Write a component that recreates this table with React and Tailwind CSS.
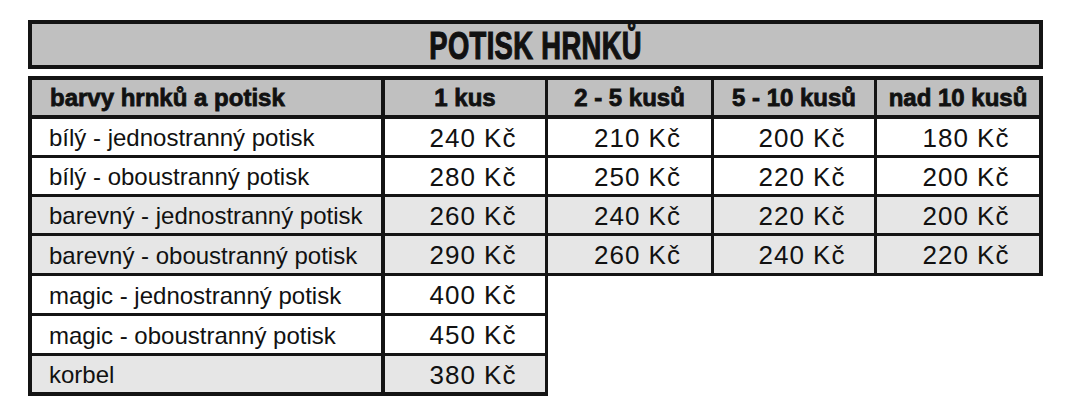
import React from "react";

const rows = [
  { label: "bílý - jednostranný potisk", prices: ["240 Kč", "210 Kč", "200 Kč", "180 Kč"], gray: false, h: "h-[39px] border-b-[3px]" },
  { label: "bílý - oboustranný potisk", prices: ["280 Kč", "250 Kč", "220 Kč", "200 Kč"], gray: false, h: "h-[39px] border-b-[3px]" },
  { label: "barevný - jednostranný potisk", prices: ["260 Kč", "240 Kč", "220 Kč", "200 Kč"], gray: true, h: "h-[39px] border-b-[3px]" },
  { label: "barevný - oboustranný potisk", prices: ["290 Kč", "260 Kč", "240 Kč", "220 Kč"], gray: true, h: "h-[40px] border-b-[3px]" },
  { label: "magic - jednostranný potisk", prices: ["400 Kč"], gray: false, h: "h-[40px] border-b-[3px]" },
  { label: "magic - oboustranný potisk", prices: ["450 Kč"], gray: false, h: "h-[40px] border-b-[3px]" },
  { label: "korbel", prices: ["380 Kč"], gray: true, h: "h-[40px] border-b-4" },
];

const colW = ["w-[163px] border-r-[3px]", "w-[166px] border-r-[3px]", "w-[163px] border-r-[3px]", "w-[166px] border-r-4"];

export default function App() {
  return (
    <div className="w-[1071px] h-[418px] bg-white pt-[20px] pl-[28px] text-[#111]" style={{ fontFamily: '"Liberation Sans", Arial, sans-serif' }}>
      <div className="w-[1015px] h-[49px] border-4 border-[#141414] bg-[#c0c0c0] flex items-center justify-center">
        <span className="inline-block scale-x-[0.72] text-[38px] font-bold leading-none tracking-[0.5px] pt-[3px] [-webkit-text-stroke:1.2px_#111]">POTISK HRNKŮ</span>
      </div>
      <div className="mt-[7px] w-fit border-l-4 border-t-4 border-[#141414]">
        <div className="flex h-[39px] border-b-4 border-[#141414] bg-[#c0c0c0] font-bold text-[24px] [-webkit-text-stroke:0.8px_#111]">
          <div className="w-[353px] border-r-4 border-[#141414] pl-[18px] flex items-center">barvy hrnků a potisk</div>
          <div className="w-[163px] border-r-[3px] border-[#141414] flex items-center justify-center">1 kus</div>
          <div className="w-[166px] border-r-[3px] border-[#141414] flex items-center justify-center">2 - 5 kusů</div>
          <div className="w-[163px] border-r-[3px] border-[#141414] flex items-center justify-center">5 - 10 kusů</div>
          <div className="w-[166px] border-r-4 border-[#141414] flex items-center justify-center">nad 10 kusů</div>
        </div>
        {rows.map((r, i) => (
          <div
            key={i}
            className={`flex w-fit ${r.h} border-[#141414] ${r.gray ? "bg-[#e6e6e6]" : "bg-white"} text-[24px]`}
          >
            <div className="w-[353px] border-r-4 border-[#141414] pl-[17px] flex items-center pt-[2px]">{r.label}</div>
            {r.prices.map((p, j) => (
              <div key={j} className={`${colW[j]} border-[#141414] flex items-center justify-center pl-4 pt-[2px] text-[26px] tracking-[1px]`}>
                {p}
              </div>
            ))}
          </div>
        ))}
      </div>
    </div>
  );
}
